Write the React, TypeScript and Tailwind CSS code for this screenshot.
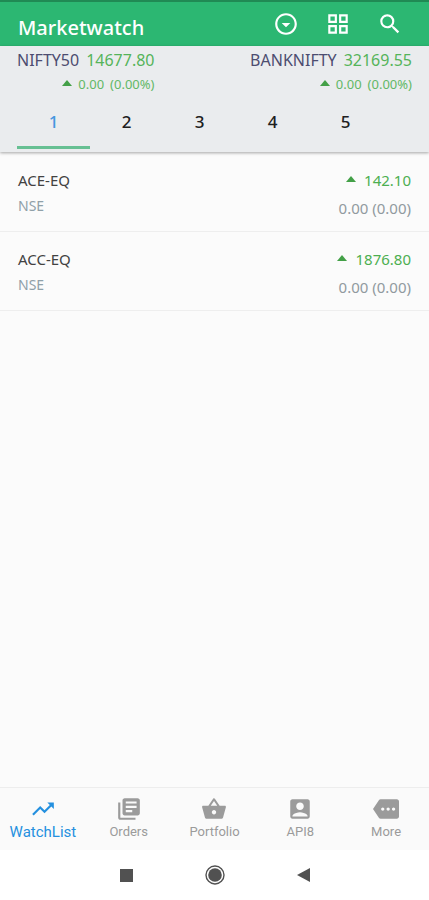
import { useState } from "react";
import {
  MdAccountBox,
  MdGridView,
  MdLibraryBooks,
  MdMore,
  MdOutlineArrowDropDownCircle,
  MdSearch,
  MdShoppingBasket,
  MdTrendingUp,
} from "react-icons/md";

const indices = [
  { name: "NIFTY50", price: "14677.80", change: "0.00", percent: "(0.00%)" },
  { name: "BANKNIFTY", price: "32169.55", change: "0.00", percent: "(0.00%)" },
];

const stocks = [
  { symbol: "ACE-EQ", exchange: "NSE", price: "142.10", change: "0.00 (0.00)" },
  { symbol: "ACC-EQ", exchange: "NSE", price: "1876.80", change: "0.00 (0.00)" },
];

const tabs = [1, 2, 3, 4, 5];

const navItems = [
  { label: "WatchList", icon: MdTrendingUp },
  { label: "Orders", icon: MdLibraryBooks },
  { label: "Portfolio", icon: MdShoppingBasket },
  { label: "API8", icon: MdAccountBox },
  { label: "More", icon: MdMore },
];

const UpArrow = () => (
  <svg width="10" height="6" viewBox="0 0 10 6" className="mb-[2px] fill-[#43a047]">
    <path d="M0 6L5 0L10 6Z" />
  </svg>
);

const Header = () => (
  <header className="flex h-[46px] items-center justify-between border-t-2 border-[#208a54] bg-[#2cb772] pr-[26px] pl-[18px] text-white">
    <h1 className="pt-[8px] text-[20px] leading-[28px] font-medium">
      Marketwatch
    </h1>
    <div className="flex gap-[26px]">
      <button aria-label="Select list">
        <MdOutlineArrowDropDownCircle size={26} />
      </button>
      <button aria-label="Grid view">
        <MdGridView size={26} />
      </button>
      <button aria-label="Search">
        <MdSearch size={26} />
      </button>
    </div>
  </header>
);

const Indices = () => (
  <div className="flex justify-between px-[17px]">
    {indices.map((item) => (
      <div key={item.name} className="flex flex-col items-end">
        <div className="flex gap-[7px] text-[16px] leading-[28px]">
          <span className="text-[#4d4d70]">{item.name}</span>
          <span className="text-[#55b45a]">{item.price}</span>
        </div>
        <div className="flex items-center gap-[6px] text-[13px] leading-[20px] text-[#62b866]">
          <UpArrow />
          <span>{item.change}</span>
          <span>{item.percent}</span>
        </div>
      </div>
    ))}
  </div>
);

const Navigation = () => (
  <nav className="grid h-[63px] grid-cols-5 border-t border-[#ededed] bg-[#fafafa] font-[Roboto,sans-serif]">
    {navItems.map(({ label, icon: Icon }, index) => (
      <a
        key={label}
        href="#"
        className={
          index === 0
            ? "flex flex-col items-center pt-[8px] text-[15px] leading-[20px] text-[#2490df]"
            : "flex flex-col items-center pt-[8px] text-[13px] leading-[20px] text-[#9b9b9b]"
        }
      >
        <Icon size={26} />
        <span>{label}</span>
      </a>
    ))}
  </nav>
);

const SystemBar = () => (
  <div className="flex h-[50px] items-center justify-center gap-[72px] bg-white text-[#515151]">
    <button aria-label="Recent apps">
      <svg width="13" height="13" viewBox="0 0 13 13" fill="currentColor">
        <path d="M0 0H13V13H0Z" />
      </svg>
    </button>
    <button aria-label="Home">
      <svg width="20" height="20" viewBox="0 0 20 20">
        <circle cx="10" cy="10" r="9" fill="none" stroke="currentColor" strokeWidth="1.4" />
        <circle cx="10" cy="10" r="6.8" fill="currentColor" />
      </svg>
    </button>
    <button aria-label="Back">
      <svg width="13" height="14" viewBox="0 0 13 14" fill="currentColor">
        <path d="M13 0V14L0 7Z" />
      </svg>
    </button>
  </div>
);

export default function App() {
  const [active, setActive] = useState(1);

  return (
    <div className="flex min-h-screen flex-col bg-[#fbfbfb] font-['Noto_Sans',sans-serif]">
      <Header />
      <section className="bg-[#eaecee] shadow-[0_1px_3px_rgba(0,0,0,0.35)]">
        <Indices />
        <div className="flex px-[17px] pt-[4px] pb-[3px]">
          {tabs.map((tab) => (
            <button
              key={tab}
              onClick={() => setActive(tab)}
              className={
                tab === active
                  ? "h-[51px] w-[73px] border-b-3 border-[#67c093] text-[17px] font-medium text-[#4596df]"
                  : "h-[51px] w-[73px] border-b-3 border-transparent text-[17px] font-medium text-[#202020]"
              }
            >
              {tab}
            </button>
          ))}
        </div>
      </section>
      <main className="flex-1 pt-px">
        <ul>
          {stocks.map((stock) => (
            <li
              key={stock.symbol}
              className="flex h-[79px] justify-between border-b border-[#eeeeee] px-[18px] pt-[16px]"
            >
              <div>
                <p className="text-[15px] leading-[22px] text-[#424242]">
                  {stock.symbol}
                </p>
                <p className="pt-[4px] text-[14px] leading-[22px] text-[#90a0a8]">
                  {stock.exchange}
                </p>
              </div>
              <div className="text-right">
                <p className="flex items-center justify-end gap-2 text-[15px] leading-[22px] text-[#4caf50]">
                  <UpArrow />
                  {stock.price}
                </p>
                <p className="pt-[6px] text-[15px] leading-[22px] text-[#919a9f]">
                  {stock.change}
                </p>
              </div>
            </li>
          ))}
        </ul>
      </main>
      <Navigation />
      <SystemBar />
    </div>
  );
}
